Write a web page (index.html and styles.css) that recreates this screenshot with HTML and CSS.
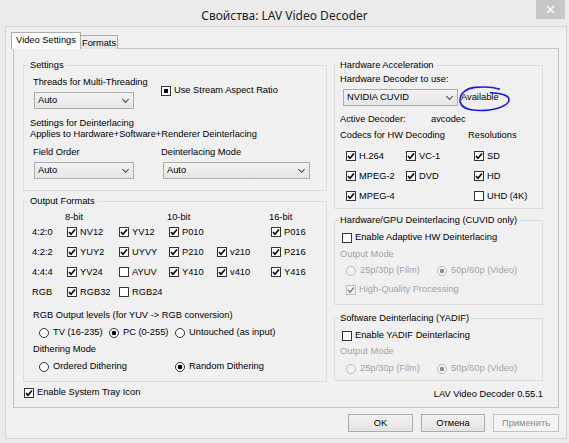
FILE: index.html
```html
<!DOCTYPE html>
<html lang="ru">
<head>
    <meta charset="UTF-8">
    <title>Свойства: LAV Video Decoder</title>
    <link rel="stylesheet" href="styles.css">
</head>
<body>
<div class="window">
    <div class="titlebar">
        <span></span>
        <div class="title">Свойства: LAV Video Decoder</div>
        <div class="close">
            <svg width="9" height="9" viewBox="0 0 9 9"><path d="M1 1L8 8M8 1L1 8" stroke="#fff" stroke-width="1.4"/></svg>
        </div>
    </div>

    <div class="client">
        <div class="tabs">
            <div class="tab active">Video Settings</div>
            <div class="tab">Formats</div>
        </div>

        <div class="page">
            <!-- left column -->
            <div class="col">
                <fieldset class="group settings">
                    <legend>Settings</legend>
                    <div class="pair">
                        <div>
                            <div class="label lbl-top">Threads for Multi-Threading</div>
                            <div class="combo short"><span>Auto</span><i class="arrow"></i></div>
                        </div>
                        <label class="check mixed aspect"><span class="box"></span>Use Stream Aspect Ratio</label>
                    </div>
                    <div class="note">Settings for Deinterlacing</div>
                    <div>Applies to Hardware+Software+Renderer Deinterlacing</div>
                    <div class="pair">
                        <div>
                            <div class="label lbl-mid">Field Order</div>
                            <div class="combo short"><span>Auto</span><i class="arrow"></i></div>
                        </div>
                        <div>
                            <div class="label lbl-mid">Deinterlacing Mode</div>
                            <div class="combo mode"><span>Auto</span><i class="arrow"></i></div>
                        </div>
                    </div>
                </fieldset>

                <fieldset class="group formats">
                    <legend>Output Formats</legend>
                    <div class="fmt-grid">
                        <span></span><span class="bits">8-bit</span><span></span><span class="bits">10-bit</span><span></span><span class="bits">16-bit</span>

                        <span>4:2:0</span>
                        <label class="check on"><span class="box"></span>NV12</label>
                        <label class="check on"><span class="box"></span>YV12</label>
                        <label class="check on"><span class="box"></span>P010</label>
                        <span></span>
                        <label class="check on"><span class="box"></span>P016</label>

                        <span>4:2:2</span>
                        <label class="check on"><span class="box"></span>YUY2</label>
                        <label class="check on"><span class="box"></span>UYVY</label>
                        <label class="check on"><span class="box"></span>P210</label>
                        <label class="check on"><span class="box"></span>v210</label>
                        <label class="check on"><span class="box"></span>P216</label>

                        <span>4:4:4</span>
                        <label class="check on"><span class="box"></span>YV24</label>
                        <label class="check"><span class="box"></span>AYUV</label>
                        <label class="check on"><span class="box"></span>Y410</label>
                        <label class="check on"><span class="box"></span>v410</label>
                        <label class="check on"><span class="box"></span>Y416</label>

                        <span>RGB</span>
                        <label class="check on"><span class="box"></span>RGB32</label>
                        <label class="check"><span class="box"></span>RGB24</label>
                    </div>

                    <div class="label sub">RGB Output levels (for YUV -&gt; RGB conversion)</div>
                    <div class="radios levels">
                        <label class="radio"><span class="dot"></span>TV (16-235)</label>
                        <label class="radio on"><span class="dot"></span>PC (0-255)</label>
                        <label class="radio"><span class="dot"></span>Untouched (as input)</label>
                    </div>
                    <div class="label sub sub-mid">Dithering Mode</div>
                    <div class="radios dither">
                        <label class="radio"><span class="dot"></span>Ordered Dithering</label>
                        <label class="radio on"><span class="dot"></span>Random Dithering</label>
                    </div>
                </fieldset>

                <label class="check on tray"><span class="box"></span>Enable System Tray Icon</label>
            </div>

            <!-- right column -->
            <div class="col">
                <fieldset class="group hw">
                    <legend>Hardware Acceleration</legend>
                    <div class="label hw-top">Hardware Decoder to use:</div>
                    <div class="hwrow">
                        <div class="combo wide"><span>NVIDIA CUVID</span><i class="arrow"></i></div>
                        <span class="avail">Available
                            <svg class="scribble" width="54" height="26" viewBox="0 0 54 26"><path d="M31 6.7C40 7 50 9 50 13.5C50 20 36 24.5 21 24.5C8 24.5 1 20.5 1 14C1 7 8 2.2 16 1.4C24 0.6 33 0.6 41 3.3" fill="none" stroke="#1a1ae0" stroke-width="1.6"/></svg>
                        </span>
                    </div>
                    <div class="active-row">
                        <span>Active Decoder:</span><span>avcodec</span>
                    </div>
                    <div class="codec-head">
                        <span>Codecs for HW Decoding</span><span>Resolutions</span>
                    </div>
                    <div class="codec-grid">
                        <label class="check on"><span class="box"></span>H.264</label>
                        <label class="check on"><span class="box"></span>VC-1</label>
                        <label class="check on"><span class="box"></span>SD</label>
                        <label class="check on"><span class="box"></span>MPEG-2</label>
                        <label class="check on"><span class="box"></span>DVD</label>
                        <label class="check on"><span class="box"></span>HD</label>
                        <label class="check on"><span class="box"></span>MPEG-4</label>
                        <span></span>
                        <label class="check"><span class="box"></span>UHD (4K)</label>
                    </div>
                </fieldset>

                <fieldset class="group gpu">
                    <legend>Hardware/GPU Deinterlacing (CUVID only)</legend>
                    <label class="check enable"><span class="box"></span>Enable Adaptive HW Deinterlacing</label>
                    <div class="label dis mode-lbl">Output Mode</div>
                    <div class="radios out">
                        <label class="radio dis"><span class="dot"></span>25p/30p (Film)</label>
                        <label class="radio dis on"><span class="dot"></span>50p/60p (Video)</label>
                    </div>
                    <label class="check dis on hq"><span class="box"></span>High-Quality Processing</label>
                </fieldset>

                <fieldset class="group sw">
                    <legend>Software Deinterlacing (YADIF)</legend>
                    <label class="check enable"><span class="box"></span>Enable YADIF Deinterlacing</label>
                    <div class="label dis mode-lbl sw-lbl">Output Mode</div>
                    <div class="radios out sw-out">
                        <label class="radio dis"><span class="dot"></span>25p/30p (Film)</label>
                        <label class="radio dis on"><span class="dot"></span>50p/60p (Video)</label>
                    </div>
                </fieldset>

                <div class="version">LAV Video Decoder 0.55.1</div>
            </div>
        </div>

        <div class="buttons">
            <div class="btn ok">OK</div>
            <div class="btn cancel">Отмена</div>
            <div class="btn apply dis">Применить</div>
        </div>
    </div>
</div>
</body>
</html>
```

FILE: styles.css
```css
* {
    box-sizing: border-box;
}

body {
    margin: 0;
    width: 569px;
    height: 443px;
    overflow: hidden;
    background-color: #ebebeb;
    font-family: 'Liberation Sans', Arial, sans-serif;
    font-size: 9.3px;
    line-height: 11px;
    color: #000;
}

label {
    display: block;
}

.window {
    display: flex;
    flex-direction: column;
    height: 443px;
}

/* title bar */
.titlebar {
    height: 26px;
    display: grid;
    grid-template-columns: 1fr auto 1fr;
    align-items: start;
}

.title {
    font-family: 'Noto Sans', sans-serif;
    font-size: 12px;
    line-height: 16px;
    padding-top: 8px;
    color: #222;
}

.close {
    justify-self: end;
    width: 29px;
    height: 19px;
    margin-right: 4px;
    background-color: #c7c7c7;
    display: flex;
    align-items: center;
    justify-content: center;
}

/* dialog body */
.client {
    margin: 0 2px 4px 5px;
    height: 413px;
    border: 1px solid #d6d6d6;
    background-color: #f0f0f0;
    padding: 5px 7px 6px 7px;
    display: flex;
    flex-direction: column;
}

.tabs {
    display: flex;
    align-items: flex-end;
    height: 17px;
    margin-left: -2px;
    position: relative;
    z-index: 1;
}

.tab {
    width: 37px;
    height: 14px;
    border: 1px solid #acacac;
    border-left: none;
    border-bottom: none;
    background: linear-gradient(#f0f0f0, #e5e5e5);
    text-align: center;
    line-height: 14px;
}

.tab.active {
    width: 70px;
    height: 17px;
    border-left: 1px solid #acacac;
    background: #fff;
    line-height: 15px;
}

.page {
    height: 360px;
    margin-top: -1px;
    border: 1px solid #c4c4c4;
    padding: 10px 15px 0 9px;
    display: grid;
    grid-template-columns: 304px 209px;
    column-gap: 7px;
    align-content: start;
}

/* group boxes */
.group {
    margin: 0;
    padding: 0 6px;
    min-width: 0;
    border: 1px solid #dcdcdc;
}

.group legend {
    padding: 0 2px;
    margin-left: -2px;
    line-height: 12px;
}

.settings { height: 132px; }
.formats { height: 187px; margin-top: 4px; }
.hw { height: 150px; padding-left: 5px; }
.gpu { height: 91px; margin-top: 5px; padding-left: 5px; }
.sw { height: 69px; margin-top: 7px; padding-left: 5px; }

/* controls */
.combo {
    height: 17px;
    border: 1px solid #acacac;
    background: linear-gradient(#f2f2f2, #e6e6e6);
    display: flex;
    align-items: center;
    justify-content: space-between;
    padding: 0 4px 0 3px;
}

.combo.short { width: 100px; margin-left: 1px; }
.combo.mode { width: 147px; margin-left: 2px; }
.combo.wide { width: 115px; }

.arrow {
    width: 5px;
    height: 5px;
    border-right: 1px solid #444;
    border-bottom: 1px solid #444;
    transform: rotate(45deg);
    margin-top: -3px;
    margin-right: 1px;
}

.check, .radio {
    display: flex;
    align-items: center;
    gap: 3px;
    white-space: nowrap;
}

.box {
    flex: none;
    width: 10px;
    height: 10px;
    border: 1px solid #333;
    background-color: #fff;
}

.check.on .box {
    background-image: url("data:image/svg+xml;utf8,<svg xmlns='http://www.w3.org/2000/svg' viewBox='0 0 8 8'><path d='M1 4 L3 6.2 L7 1.4' fill='none' stroke='%23000' stroke-width='1.6'/></svg>");
}

.check.mixed .box {
    background: radial-gradient(#fff, #fff);
    background-color: #fff;
    box-shadow: inset 0 0 0 2px #fff, inset 0 0 0 6px #000;
}

.dot {
    flex: none;
    width: 10px;
    height: 10px;
    border: 1px solid #333;
    border-radius: 50%;
    background-color: #fff;
}

.radio {
    gap: 4px;
}

.radio.on .dot {
    background: radial-gradient(circle, #000 0 2px, #fff 2.6px);
}

.dis {
    color: #a3a3a3;
}

.dis .box, .dis .dot {
    border-color: #bcbcbc;
    background-color: #f4f4f4;
}

.check.dis.on .box {
    background-image: url("data:image/svg+xml;utf8,<svg xmlns='http://www.w3.org/2000/svg' viewBox='0 0 8 8'><path d='M1 4 L3 6.2 L7 1.4' fill='none' stroke='%23888' stroke-width='1.6'/></svg>");
}

.radio.dis.on .dot {
    background: radial-gradient(circle, #8c8c8c 0 2px, #f4f4f4 2.6px);
}

/* settings box */
.pair {
    display: grid;
    grid-template-columns: 128px 1fr;
    padding-left: 3px;
}

.lbl-top { margin-top: 6px; }
.lbl-mid { margin-top: 7px; }
.combo { margin-top: 4px; }
.aspect { margin-top: 14px; align-self: start; }
.note { margin-top: 9px; }

/* output formats */
.fmt-grid {
    display: grid;
    grid-template-columns: 35px 52px 50px 48px 54px 1fr;
    grid-template-rows: 10px repeat(4, 20px);
    align-items: center;
    margin: 5px 0 0 2px;
}

.bits {
    margin-left: -2px;
    line-height: 10px;
}

.sub { margin: 8px 0 0 3px; }
.sub-mid { margin-top: 6px; }

.radios {
    display: grid;
    margin: 6px 0 0 9px;
}

.levels { grid-template-columns: 70px 66px auto; }
.dither { grid-template-columns: 136px auto; }

.tray {
    margin: 5px 0 0 1px;
}

/* hardware box */
.hw-top { margin-top: 3px; }

.hwrow {
    display: flex;
    align-items: flex-end;
    margin-left: 3px;
}

.avail {
    position: relative;
    margin-left: 3px;
    height: 14px;
}

.scribble {
    position: absolute;
    left: -2px;
    top: -6px;
}

.active-row {
    display: grid;
    grid-template-columns: 91px auto;
    margin-top: 8px;
}

.codec-head {
    display: grid;
    grid-template-columns: 128px auto;
    margin-top: 5px;
}

.codec-grid {
    display: grid;
    grid-template-columns: 60px 68px auto;
    grid-template-rows: repeat(3, 20px);
    align-items: center;
    margin: 5px 0 0 6px;
}

.enable { margin: 6px 0 0 2px; }
.mode-lbl { margin-top: 6px; }
.sw-lbl { margin-top: 5px; }
.out { grid-template-columns: 91px auto; margin: 5px 0 0 6px; }
.sw-out { margin-top: 6px; }
.hq { margin: 8px 0 0 6px; }

.version {
    margin-top: 8px;
    text-align: right;
}

/* bottom buttons */
.buttons {
    display: flex;
    justify-content: flex-end;
    gap: 8px;
    margin-top: 6px;
}

.btn {
    width: 65px;
    height: 18px;
    border: 1px solid #acacac;
    background: linear-gradient(#f0f0f0, #e5e5e5);
    display: flex;
    align-items: center;
    justify-content: center;
}

.btn.cancel { width: 64px; }
.btn.apply { width: 66px; }

.btn.dis {
    border-color: #c4c4c4;
    background: #f4f4f4;
    color: #8a8a8a;
}
```
